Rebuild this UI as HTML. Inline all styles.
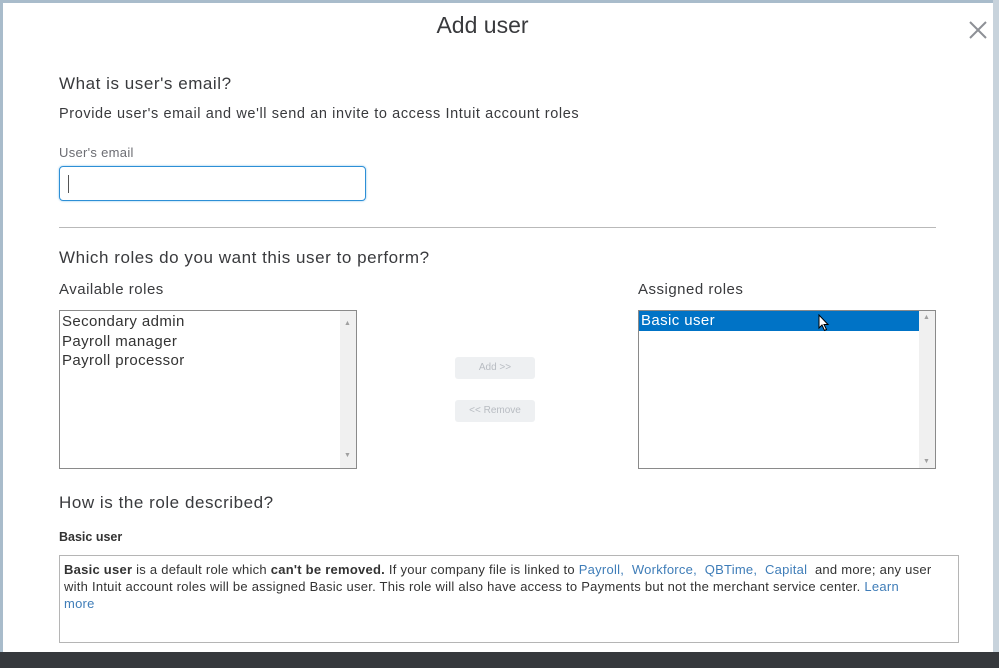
<!DOCTYPE html>
<html><head><style>
*{margin:0;padding:0;box-sizing:border-box}
body{width:999px;height:668px;overflow:hidden;background:#fff;font-family:"Liberation Sans",sans-serif;color:#393a3d;position:relative}
.frame{position:absolute;left:0;top:0;width:999px;height:668px;border:3px solid #a9bccb;border-bottom:none}
.rbar{position:absolute;right:0;top:0;width:6px;height:668px;background:#c8d3dc}
.abs{position:absolute;white-space:nowrap}
.title{left:0;width:965px;text-align:center;top:12px;font-size:23px;color:#393a3d}
h2{position:absolute;font-weight:normal;font-size:17px;color:#393a3d;white-space:nowrap;letter-spacing:0.55px}
.p{font-size:14.5px;color:#393a3d;letter-spacing:0.6px}
.lbl{font-size:13px;color:#6b6c72;letter-spacing:0.3px}
.input{position:absolute;left:59px;top:166px;width:307px;height:35px;border:1px solid #2d8fd6;border-radius:4px;box-shadow:0 0 2px #8cc4ec}
.caret{position:absolute;left:8px;top:8px;width:1px;height:18px;background:#555}
.hr{position:absolute;left:59px;top:227px;width:877px;height:1px;background:#b9b9b9}
.list{position:absolute;border:1px solid #8a8a8a;background:#fff;font-size:15px;color:#333;letter-spacing:0.4px}
.sb{position:absolute;right:0;top:0;bottom:0;width:16px;background:#f0f0f0}
.sb:before{content:"▲";position:absolute;top:3px;left:4px;font-size:7px;color:#a0a0a0}
.sb:after{content:"▼";position:absolute;bottom:3px;left:4px;font-size:7px;color:#a0a0a0}
.btn{position:absolute;left:455px;width:80px;height:22px;background:#eef0f2;border-radius:3px;font-size:10px;color:#b8bcc2;text-align:center;line-height:22px}
.desc{position:absolute;left:59px;top:555px;width:900px;height:88px;border:1px solid #b5b5b5;padding:5px 4px;font-size:13px;letter-spacing:0.25px;line-height:17px;color:#333;white-space:nowrap}
.desc a{color:#3f7db8;text-decoration:none}
.bottom{position:absolute;left:0;top:652px;width:999px;height:16px;background:#36393d}
</style></head><body>
<div class="frame"></div><div class="rbar"></div>
<div class="abs title">Add user</div>
<svg class="abs" style="left:969px;top:21px" width="18" height="18" viewBox="0 0 18 18"><path d="M1 1L17 17M17 1L1 17" stroke="#8d9096" stroke-width="2"/></svg>
<h2 style="left:59px;top:74px">What is user's email?</h2>
<div class="abs p" style="left:59px;top:106px">Provide user's email and we'll send an invite to access Intuit account roles</div>
<div class="abs lbl" style="left:59px;top:145px">User's email</div>
<div class="input"><div class="caret"></div></div>
<div class="hr"></div>
<h2 style="left:59px;top:248px">Which roles do you want this user to perform?</h2>
<div class="abs" style="left:59px;top:281px;font-size:15px;letter-spacing:0.5px">Available roles</div>
<div class="abs" style="left:638px;top:281px;font-size:15px;letter-spacing:0.5px">Assigned roles</div>
<div class="list" style="left:59px;top:310px;width:298px;height:159px;padding:1px 2px;line-height:19.5px">Secondary admin<br>Payroll manager<br>Payroll processor<div class="sb"></div></div>
<div class="btn" style="top:357px">Add &gt;&gt;</div>
<div class="btn" style="top:400px">&lt;&lt; Remove</div>
<div class="list" style="left:638px;top:310px;width:298px;height:159px">
<div style="position:absolute;left:0;top:0;width:281px;height:20px;background:#0073c6;color:#fff;padding-left:2px;line-height:20px">Basic user</div>
<div style="position:absolute;left:179px;top:3px">
<svg width="12" height="18" viewBox="0 0 12 18"><path d="M1 1 L1 14 L4 11 L6.5 16.5 L8.5 15.5 L6 10.5 L10 10.5 Z" fill="#fff" stroke="#000" stroke-width="1"/></svg></div>
<div class="sb"></div></div>
<h2 style="left:59px;top:493px">How is the role described?</h2>
<div class="abs" style="left:59px;top:530px;font-size:12.5px;font-weight:bold;color:#333">Basic user</div>
<div class="desc"><b>Basic user</b> is a default role which <b>can't be removed.</b> If your company file is linked to <a>Payroll,</a>&nbsp; <a>Workforce,</a>&nbsp; <a>QBTime,</a>&nbsp; <a>Capital</a>&nbsp; and more; any user<br>with Intuit account roles will be assigned Basic user. This role will also have access to Payments but not the merchant service center. <a>Learn<br>more</a></div>
<div class="bottom"></div>
</body></html>
